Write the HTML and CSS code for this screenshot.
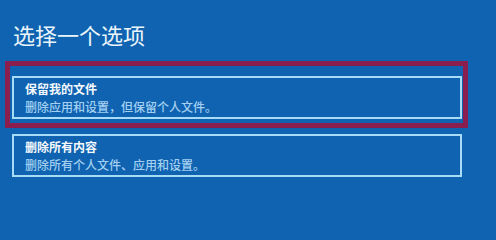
FILE: index.html
```html
<!DOCTYPE html>
<html lang="zh-CN">
<head>
<meta charset="utf-8">
<title>选择一个选项</title>
<link rel="stylesheet" href="styles.css">
</head>
<body>
<main class="page">
  <h1 class="title">选择一个选项</h1>
  <div class="options">
    <div class="option-wrap">
      <div class="option">
        <div class="option-name">保留我的文件</div>
        <div class="option-desc">删除应用和设置，但保留个人文件。</div>
      </div>
      <div class="highlight"></div>
    </div>
    <div class="option">
      <div class="option-name">删除所有内容</div>
      <div class="option-desc">删除所有个人文件、应用和设置。</div>
    </div>
  </div>
</main>
</body>
</html>
```

FILE: styles.css
```css
html, body {
  margin: 0;
  padding: 0;
}
body {
  background: #0f63b0;
  width: 496px;
  height: 220px;
  overflow: hidden;
  font-family: "Noto Sans CJK SC", "Noto Sans", sans-serif;
}
.page {
  padding: 20px 34px 0 12px;
}
.title {
  margin: 0 0 0 1px;
  font-size: 22px;
  line-height: 29px;
  font-weight: 400;
  color: #eaf4fb;
}
.options {
  margin-top: 27px;
  display: flex;
  flex-direction: column;
  gap: 15px;
}
.option-wrap {
  position: relative;
}
.option {
  border: 2px solid #a6dcf6;
  padding: 2px 10px 1px 11px;
  box-sizing: border-box;
  height: 43px;
}
.option-name {
  font-size: 12px;
  line-height: 18px;
  font-weight: 700;
  color: #f4f9fd;
}
.option-desc {
  font-size: 12px;
  line-height: 18px;
  font-weight: 500;
  color: #a3d0f2;
}
.highlight {
  position: absolute;
  left: -7px;
  top: -15px;
  right: -6px;
  bottom: -9px;
  border: 5px solid #8a1e4e;
  pointer-events: none;
}
```
